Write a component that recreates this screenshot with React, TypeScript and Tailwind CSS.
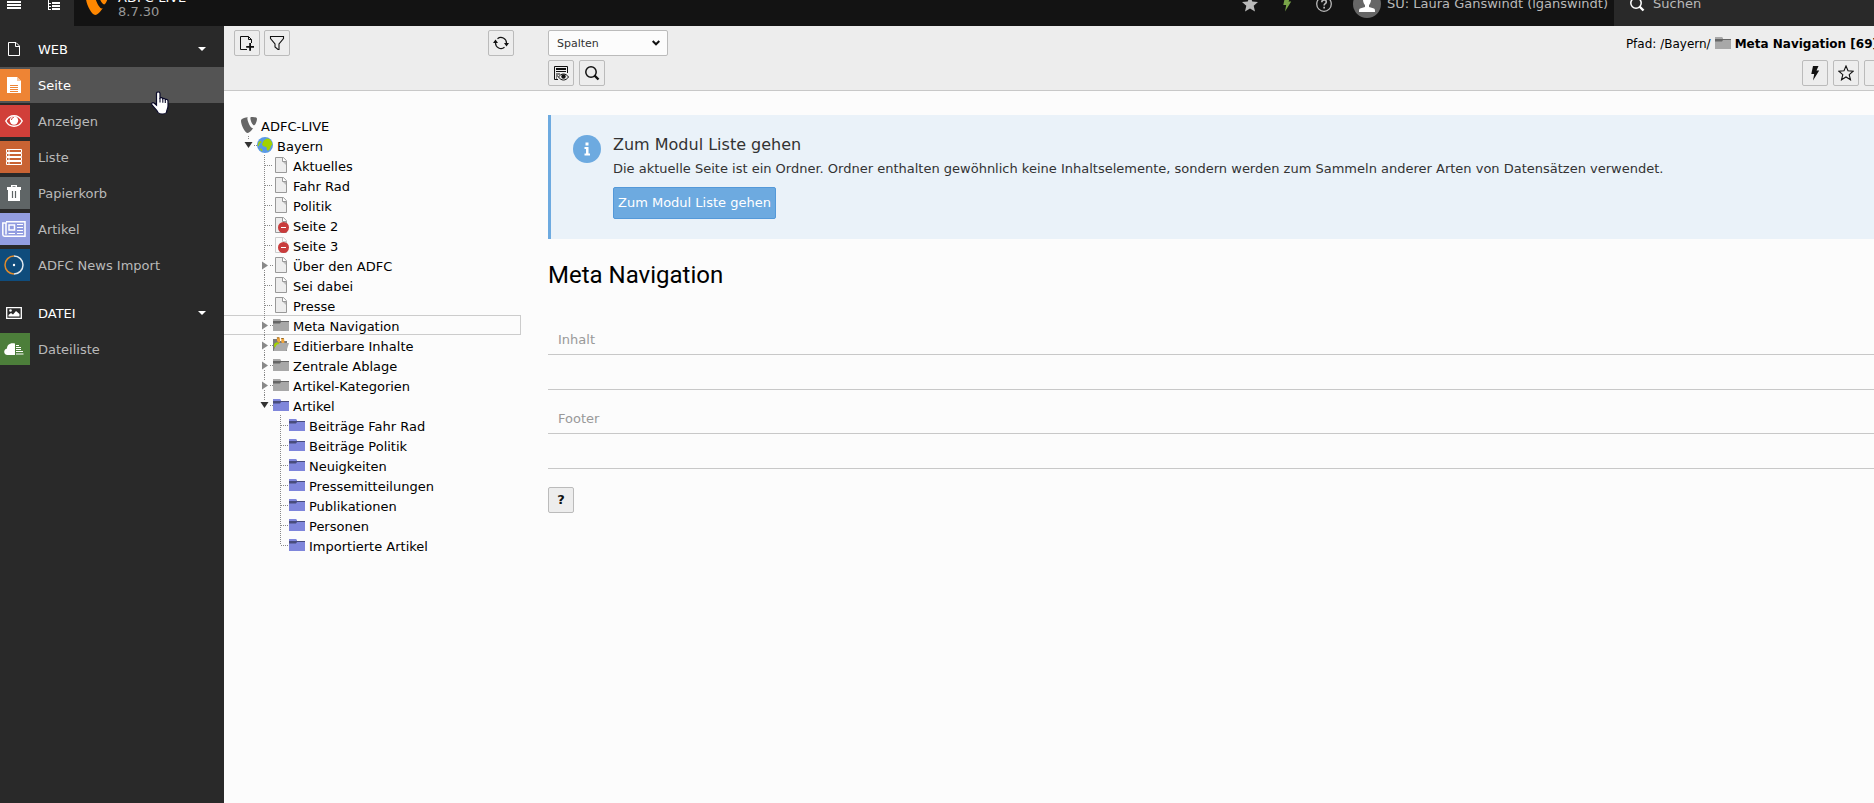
import React, { useState } from "react";

type TreeIcon = "page" | "pageHidden" | "pageFaded" | "folder" | "folderUsers" | "folderBlue" | "globe" | "typo3";

interface TreeRow {
  label: string;
  icon: TreeIcon;
  level: number;
  toggle?: "open" | "closed";
  last?: boolean;
}

const TREE: TreeRow[] = [
  { label: "ADFC-LIVE", icon: "typo3", level: 0 },
  { label: "Bayern", icon: "globe", level: 1, toggle: "open", last: true },
  { label: "Aktuelles", icon: "page", level: 2 },
  { label: "Fahr Rad", icon: "page", level: 2 },
  { label: "Politik", icon: "page", level: 2 },
  { label: "Seite 2", icon: "pageHidden", level: 2 },
  { label: "Seite 3", icon: "pageFaded", level: 2 },
  { label: "Über den ADFC", icon: "page", level: 2, toggle: "closed" },
  { label: "Sei dabei", icon: "page", level: 2 },
  { label: "Presse", icon: "page", level: 2 },
  { label: "Meta Navigation", icon: "folder", level: 2, toggle: "closed" },
  { label: "Editierbare Inhalte", icon: "folderUsers", level: 2, toggle: "closed" },
  { label: "Zentrale Ablage", icon: "folder", level: 2, toggle: "closed" },
  { label: "Artikel-Kategorien", icon: "folder", level: 2, toggle: "closed" },
  { label: "Artikel", icon: "folderBlue", level: 2, toggle: "open", last: true },
  { label: "Beiträge Fahr Rad", icon: "folderBlue", level: 3 },
  { label: "Beiträge Politik", icon: "folderBlue", level: 3 },
  { label: "Neuigkeiten", icon: "folderBlue", level: 3 },
  { label: "Pressemitteilungen", icon: "folderBlue", level: 3 },
  { label: "Publikationen", icon: "folderBlue", level: 3 },
  { label: "Personen", icon: "folderBlue", level: 3 },
  { label: "Importierte Artikel", icon: "folderBlue", level: 3, last: true },
];

const Typo3Mark = ({ className }: { className: string }) => (
  <svg viewBox="1.9 1.9 12.1 12.1" className={className} fill="currentColor" aria-hidden="true">
    <path d="M11.1 10.3c-.2 0-.3.1-.5.1-1.6 0-3.9-5.5-3.9-7.3 0-.7.2-.9.4-1.1-1.9.2-4.2.9-4.9 1.8-.2.2-.3.6-.3 1.1C1.9 7.7 4.9 14 7 14c1.1 0 2.8-1.7 4.1-3.7M10.1 1.9c1.9 0 3.9.3 3.9 1.4 0 2.2-1.4 4.9-2.1 4.9-1.3 0-2.9-3.6-2.9-5.4 0-.8.3-.9 1.1-.9" />
  </svg>
);

// 16x16 icon frame used by nearly everything in the backend
const Icon = ({ children, className = "" }: { children: React.ReactNode; className?: string }) => (
  <svg viewBox="0 0 16 16" className={`h-4 w-4 shrink-0 ${className}`} fill="currentColor" aria-hidden="true">
    {children}
  </svg>
);

const Search = ({ className = "" }: { className?: string }) => (
  <Icon className={className}>
    <circle cx="7" cy="7" r="5.2" fill="none" stroke="currentColor" strokeWidth="1.5" />
    <path d="M10.5 10.5l4 4" stroke="currentColor" strokeWidth="2.4" />
  </Icon>
);

const Bolt = ({ className = "" }: { className?: string }) => (
  <Icon className={className}>
    <path d="M6 1h5.5L9.5 5.600h2.700L6 15.500l1.200-6.500H4.300z" />
  </Icon>
);

const Folder = ({ back, tab }: { back: string; tab: string }) => (
  <Icon>
    <path fill={back} d="M0 2h7l1 1v1h8v10H0z" />
    <path fill={tab} d="M0 4h16v1H8L7 6.5H0z" />
  </Icon>
);

const Page = ({ faded = false, hidden = false }: { faded?: boolean; hidden?: boolean }) => (
  <Icon>
    <path fill={faded ? "#fafafa" : "#ededed"} stroke={faded ? "#ccc" : "#999"} d="M2.5.5h7.8l3.2 3.2v11.8h-11z" />
    <path fill={faded ? "#e8e8e8" : "#bbb"} d="M9 4l4 4V4z" />
    <path fill="#fff" stroke={faded ? "#ccc" : "#999"} d="M9.5.5v4h4" />
    {hidden && (
      <>
        <circle cx="10.5" cy="10.5" r="5.5" fill="#c83c3c" />
        <path fill="#fff" d="M8 10h5v1H8z" />
      </>
    )}
  </Icon>
);

const NodeIcon = ({ icon }: { icon: TreeIcon }) => {
  switch (icon) {
    case "typo3":
      return <Typo3Mark className="h-4 w-4 shrink-0 text-[#666]" />;
    case "globe":
      return (
        <Icon>
          <circle cx="8" cy="8" r="8" fill="#5999e6" />
          <path fill="#a2d200" d="M7 3.2l3-1.7 2.6.4 2.2 3 .7 3-1.3.6-1 3-2 2.2-1.3-.6-.5-3L6 9.2l-1-2 1-2.3zM1.8 4.5L4 4l.6 1.4-2 1.4-1 2.4-1-.6zM2.5 11l2.3 1 .8 2.4-1.8-1z" />
        </Icon>
      );
    case "pageHidden":
      return <Page hidden />;
    case "pageFaded":
      return <Page hidden faded />;
    case "folder":
      return <Folder back="#a8a8a8" tab="#666" />;
    case "folderBlue":
      return <Folder back="#7f86db" tab="#484c7d" />;
    case "folderUsers":
      return (
        <Icon>
          <path fill="#7a7a7a" d="M0 2h5l1 2h8v10H0z" />
          <path fill="#aaa" d="M3.5 6H16l-2.6 8H.5z" />
          <path fill="#a2d200" d="M1 8.5C1 6 3 5 5 5.2L6.5 7 4 7.5 1.5 11z" />
          <path fill="#f0a63c" d="M4 .8C5.5-.2 7 .6 7 2.5v3H5.5L4 3.8zM8.3 1.5c1.2-1 3-.3 3 1.5v3H9L8.3 5z" />
          <path fill="#7a4f10" d="M3.8.5h2.6v.8H3.8zM8.2 1.2h2.6V2H8.2z" />
        </Icon>
      );
    default:
      return <Page />;
  }
};

// Dotted connector in front of a tree node, with the expand arrow where there is one
const Connector = ({ toggle, last, level }: { toggle?: "open" | "closed"; last?: boolean; level: number }) => (
  <svg viewBox="0 0 16 20" className="h-5 w-4 shrink-0" aria-hidden="true">
    <g stroke="#888" strokeDasharray="1 1" fill="none">
      {level === 1 ? <path d="M7.5 1v3" /> : toggle ? <path d="M7.5 0v5" /> : <path d={last ? "M7.5 0v10" : "M7.5 0v20"} />}
      {toggle && !last && <path d="M7.5 15v5" />}
      <path d={toggle ? "M13 10.5h3" : "M8 10.5h8"} />
    </g>
    {toggle === "closed" && <path fill="#888" d="M5 6.5v8l6-4z" />}
    {toggle === "open" && <path fill="#333" d="M3.5 7h8l-4 6z" />}
  </svg>
);

const ICON_PAGE = (
  <Icon>
    <path d="M1 0h10l4 4v12H1z" fill="#fff" />
    <path d="M11 0v4h4z" fill="#f7c49a" />
    <path d="M4 8.500h8M4 10.500h8M4 12.500h8M4 14.500h8" stroke="#ee8434" />
  </Icon>
);

const ICON_VIEW = (
  <svg viewBox="0 0 18 16" className="h-4 w-[18px]" fill="none" aria-hidden="true">
    <path d="M.8 8C4.500 1 13.500 1 17.200 8 13.500 15 4.500 15 .8 8z" stroke="#fff" strokeWidth="1.4" />
    <circle cx="9" cy="7.500" r="4.200" fill="#fff" />
    <path d="M6.500 7c0-1.500 1-2.500 2.300-2.600" stroke="#d13f39" />
  </svg>
);

const ICON_LIST = (
  <Icon>
    {[0.5, 4.5, 8.5, 12.5].map((y) => (
      <g key={y}>
        <path d={`M.5 ${y}h15v3H.5z`} fill="none" stroke="#fff" />
        <path d={`M3 ${y}v3`} stroke="#fff" />
      </g>
    ))}
  </Icon>
);

const ICON_TRASH = (
  <Icon>
    <path d="M5 0h6v2h4v3H1V2h4zM6.500 1.200V2h3v-.8z" fillRule="evenodd" fill="#fff" />
    <path d="M2 5h12v11H2z" fill="#fff" />
    <path d="M6.500 6v7M9.500 6v7" stroke="#5f6566" strokeWidth="1.200" />
  </Icon>
);

const ICON_NEWS = (
  <svg viewBox="0 0 24 16" className="h-4 w-6" fill="none" stroke="#fff" aria-hidden="true">
    <path d="M4 .8h19v14.400H2.500C1.300 15.200.8 14.500.8 13.500V2H4v11.500" strokeWidth="1.500" />
    <path d="M7 4h5.500v5H7z" strokeWidth="1.500" />
    <path d="M15 3.500h6M15 6.500h6M15 9.500h6M6.500 12.500H13M15 12.500h6" />
  </svg>
);

const ICON_RING = (
  <svg viewBox="0 0 20 20" className="h-5 w-5" fill="none" aria-hidden="true">
    <path d="M10 1a9 9 0 0 1 0 18" stroke="#dfe8ef" strokeWidth="1.500" />
    <path d="M10 1a9 9 0 0 0 0 18" stroke="#e08b2c" strokeWidth="1.500" />
    <circle cx="10" cy="10" r="1.200" fill="#fff" />
  </svg>
);

const ICON_CLOUD = (
  <svg viewBox="0 0 20 12" className="h-3 w-5" aria-hidden="true">
    <path fill="#fff" d="M11 0v12H3.500C-.8 12-.8 6 3 5.500 3 2 6-.8 11 .5z" />
    <path d="M12 2.500h3M12 4.500h5M12 6.500h5M12 8.500h7M12 11h7.500" stroke="#fff" strokeWidth="1.200" />
  </svg>
);

const MODULES = [
  { label: "Seite", color: "bg-[#ee8434]", icon: ICON_PAGE },
  { label: "Anzeigen", color: "bg-[#d13f39]", icon: ICON_VIEW },
  { label: "Liste", color: "bg-[#c96333]", icon: ICON_LIST },
  { label: "Papierkorb", color: "bg-[#5f6566]", icon: ICON_TRASH },
  { label: "Artikel", color: "bg-[#929de0]", icon: ICON_NEWS },
  { label: "ADFC News Import", color: "bg-[#0f4c7c]", icon: ICON_RING },
];

const FILE_MODULES = [{ label: "Dateiliste", color: "bg-[#4c7e3a]", icon: ICON_CLOUD }];

interface GroupProps {
  title: string;
  icon: React.ReactNode;
  modules: typeof MODULES;
  active: string;
  onSelect: (label: string) => void;
}

const ModuleGroup = ({ title, icon, modules, active, onSelect }: GroupProps) => (
  <section>
    <button className="flex h-9 w-full items-center text-left text-white">
      <span className="flex w-[38px] items-center pl-1.5">{icon}</span>
      <span className="flex-1 pt-0.5">{title}</span>
      <svg viewBox="0 0 8 4" className="mr-[18px] h-1 w-2" fill="#fff" aria-hidden="true">
        <path d="M0 0h8L4 4z" />
      </svg>
    </button>
    <ul>
      {modules.map((m) => (
        <li key={m.label}>
          <button
            onClick={() => onSelect(m.label)}
            className={`flex h-9 w-full items-center gap-2 text-left ${
              active === m.label ? "bg-[#545454] text-white" : "text-[#b9b9b9]"
            }`}
          >
            <span className={`flex h-8 w-[30px] shrink-0 items-center justify-center pr-0.5 ${m.color}`}>{m.icon}</span>
            <span className="pt-0.5">{m.label}</span>
          </button>
        </li>
      ))}
    </ul>
  </section>
);

const ToolButton = ({ label, children }: { label: string; children: React.ReactNode }) => (
  <button
    aria-label={label}
    className="flex h-[26px] w-[26px] shrink-0 items-center justify-center rounded-xs border border-[#bbb] bg-[#ededed] text-[#111]"
  >
    {children}
  </button>
);

const Column = ({ title }: { title: string }) => (
  <section>
    <h2 className="flex h-11 items-end border-b border-[#c8c8c8] px-2.5 pb-1 text-[#999]">{title}</h2>
    <div className="h-[35px] border-b border-[#c8c8c8]" />
  </section>
);

export default function App() {
  const [activeModule, setActiveModule] = useState("Seite");
  const [selected, setSelected] = useState("Meta Navigation");

  return (
    <div className="relative h-screen overflow-hidden bg-[#fcfcfc] font-['DejaVu_Sans',Verdana,sans-serif] text-[13px] leading-5 text-black">
      <div className="flex h-full w-[calc(100%+40px)] flex-col">
        {/* Top bar, scrolled partly out of view */}
        <header className="flex h-[26px] shrink-0 items-end overflow-hidden bg-[#131313] text-[#b9b9b9]">
          <div className="flex h-[45px] w-[74px] shrink-0 items-center gap-[26px] bg-[#292929] pl-1.5 text-white">
            <button aria-label="Menü">
              <Icon>
                <path d="M1 2h14v2H1zM1 5h14v2H1zM1 8h14v2H1zM1 11h14v2H1z" />
              </Icon>
            </button>
            <button aria-label="Seitenbaum">
              <Icon>
                <path d="M0 0h1v14H0zM0 3h3v1H0zM0 7h3v1H0zM0 10h3v1H0zM0 13h3v1H0zM4 2h8v2H4zM4 6h8v2H4zM4 9h8v2H4zM4 12h8v2H4z" />
              </Icon>
            </button>
          </div>
          <div className="flex h-[45px] flex-1 items-center gap-2.5 pl-3">
            <Typo3Mark className="h-[22px] w-[22px] text-[#ff8700]" />
            <div className="pt-0.5 leading-[14px]">
              <div className="text-white">ADFC-LIVE</div>
              <div className="text-[#999]">8.7.30</div>
            </div>
          </div>
          <div className="flex h-[45px] shrink-0 items-center gap-[21px] pr-1.5">
            <button aria-label="Lesezeichen">
              <Icon>
                <path d="M8 0l2.300 5.400 5.700.5-4.300 3.900L13 15.500l-5-3-5 3 1.300-5.700L0 5.900l5.700-.5z" />
              </Icon>
            </button>
            <button aria-label="Cache leeren">
              <Bolt className="text-[#79a548]" />
            </button>
            <button aria-label="Hilfe">
              <Icon>
                <circle cx="8" cy="8" r="7.300" fill="none" stroke="currentColor" strokeWidth="1.300" />
                <path d="M5.800 6.300C5.800 3 10.300 3.300 10.300 6c0 1.700-2.200 1.700-2.200 3.500" fill="none" stroke="currentColor" strokeWidth="1.600" />
                <path d="M7.300 10.800H9v1.700H7.300z" />
              </Icon>
            </button>
            <button className="flex items-center gap-1.5">
              <svg viewBox="0 0 28 28" className="h-7 w-7" aria-hidden="true">
                <circle cx="14" cy="14" r="14" fill="#666" />
                <path fill="#fff" d="M14 5c3 0 4 2 4 4.500S17 14 16 15v2l5 1.500c1 .5 1 1.500 1 3.500H6c0-2 0-3 1-3.500L12 17v-2c-1-1-2-3-2-5.500S11 5 14 5z" />
              </svg>
              SU: Laura Ganswindt (lganswindt)
            </button>
          </div>
          <label className="flex h-[45px] w-[300px] shrink-0 items-center gap-2 bg-[#292929] pl-[15px]">
            <Search className="text-white" />
            <input
              type="search"
              aria-label="Suchen"
              placeholder="Suchen"
              className="w-full bg-transparent outline-none placeholder:text-[#b9b9b9]"
            />
          </label>
        </header>

        <div className="flex min-h-0 flex-1">
          <nav className="flex w-[224px] shrink-0 flex-col gap-3 bg-[#292929] pt-[5px]">
            <ModuleGroup
              title="WEB"
              icon={
                <Icon>
                  <path d="M2.500 1.500h7.500l3.500 3.500v9.500h-11zM9.500 1.500V5.500h4" fill="none" stroke="#fff" />
                </Icon>
              }
              modules={MODULES}
              active={activeModule}
              onSelect={setActiveModule}
            />
            <ModuleGroup
              title="DATEI"
              icon={
                <Icon>
                  <path d="M.7 2.700h14.600v10.600H.7z" fill="none" stroke="#fff" strokeWidth="1.300" />
                  <circle cx="4.500" cy="5.500" r="1.300" fill="#fff" />
                  <path d="M2.500 11.500V10l2.500-2 2 1.500L10 6l3.500 3v2.500z" fill="#fff" />
                </Icon>
              }
              modules={FILE_MODULES}
              active={activeModule}
              onSelect={setActiveModule}
            />
          </nav>

          {/* Page tree */}
          <aside className="flex w-[300px] shrink-0 flex-col">
            <div className="flex h-[65px] items-start gap-1 border-b border-[#c8c8c8] bg-[#ededed] px-2.5 pt-1">
              <ToolButton label="Neue Seite">
                <Icon>
                  <path d="M8 14.500H1.500v-13h8l3 3V8M9.500 1.500v3h3" fill="none" stroke="currentColor" />
                  <path d="M10.200 8h1.800v3h3v1.800h-3v3h-1.800v-3h-3V11h3z" />
                </Icon>
              </ToolButton>
              <ToolButton label="Filter">
                <Icon>
                  <path d="M1.500 1.500h13v2L10 9v5.500h-1L6 12V9L1.500 3.500z" fill="none" stroke="currentColor" strokeWidth="1.100" />
                </Icon>
              </ToolButton>
              <div className="ml-auto">
                <ToolButton label="Aktualisieren">
                  <Icon>
                    <path d="M4.500 3.800a5.500 5.500 0 0 1 9 4.200M11.500 12.200A5.500 5.500 0 0 1 2.500 8" fill="none" stroke="currentColor" strokeWidth="1.200" />
                    <path d="M11 8h5l-2.500 3.500zM0 8h5L2.500 4.500z" />
                  </Icon>
                </ToolButton>
              </div>
            </div>
            <ul className="mr-[3px] pt-6">
              {TREE.map((row) => (
                <li key={row.label}>
                  <button
                    onClick={() => setSelected(row.label)}
                    className={`flex h-5 w-full items-center border-y border-r pl-[17px] text-left ${
                      selected === row.label ? "border-[#ccc]" : "border-transparent"
                    }`}
                  >
                    {row.level > 1 && <span className="w-4 shrink-0" />}
                    {row.level > 2 && <span className="w-4 shrink-0" />}
                    {row.level > 0 && <Connector toggle={row.toggle} last={row.last} level={row.level} />}
                    <NodeIcon icon={row.icon} />
                    <span className="pt-1 pl-1 whitespace-nowrap">{row.label}</span>
                  </button>
                </li>
              ))}
            </ul>
          </aside>

          <main className="min-w-0 flex-1">
            <div className="flex h-[65px] justify-between border-b border-[#c8c8c8] bg-[#ededed] px-6 pt-1">
              <div className="flex flex-col gap-1">
                <div className="relative">
                  <select
                    aria-label="Ansicht"
                    className="h-[26px] w-[120px] appearance-none rounded-xs border border-[#bbb] bg-[#fcfcfc] pt-0.5 pl-2 text-[11px] text-[#333]"
                  >
                    <option>Spalten</option>
                    <option>Sprachen</option>
                  </select>
                  <svg viewBox="0 0 8 6" className="pointer-events-none absolute top-2.5 right-2 h-1.5 w-2" fill="none" stroke="#111" strokeWidth="2" aria-hidden="true">
                    <path d="M.7 1L4 4.300 7.300 1" />
                  </svg>
                </div>
                <div className="flex gap-[5px]">
                  <ToolButton label="Seite anzeigen">
                    <Icon>
                      <path d="M5 14.500H1.500v-13h13V8" fill="none" stroke="currentColor" />
                      <path d="M3 3h10v2H3zM3 6h10v1H3zM3 8.500h4v1H3zM3 10.500h2v1H3zM3 12.500h1v1H3z" />
                      <path d="M5.500 12c2.500-4 7.500-4 10 0-2.500 4-7.500 4-10 0z" fill="#ededed" stroke="currentColor" />
                      <circle cx="10.500" cy="11.500" r="2.200" />
                    </Icon>
                  </ToolButton>
                  <ToolButton label="Suche">
                    <Search />
                  </ToolButton>
                </div>
              </div>
              <div className="flex flex-col items-end gap-1">
                <div className="mr-3 flex h-[26px] items-center gap-1 text-xs whitespace-nowrap">
                  <span className="pt-0.5">Pfad: /Bayern/</span>
                  <Folder back="#a8a8a8" tab="#666" />
                  <strong className="pt-0.5">Meta Navigation [69]</strong>
                </div>
                <div className="flex gap-[5px]">
                  <ToolButton label="Cache dieser Seite löschen">
                    <Bolt />
                  </ToolButton>
                  <ToolButton label="Lesezeichen anlegen">
                    <Icon>
                      <path d="M8 1l2 4.800 5.200.4-4 3.500 1.300 5.100L8 12l-4.500 2.800 1.300-5.100-4-3.500L6 5.800z" fill="none" stroke="currentColor" strokeWidth="1.100" />
                    </Icon>
                  </ToolButton>
                  <ToolButton label="Hilfe">
                    <Icon>
                      <path d="M9 3h6v10H9z" />
                    </Icon>
                  </ToolButton>
                </div>
              </div>
            </div>

            <div className="px-6 pt-6">
              <div className="flex gap-3 border-l-3 border-[#6daae0] bg-[#eaf2f9] py-5 pl-[22px] text-[#333]">
                <svg viewBox="0 0 28 28" className="h-7 w-7 shrink-0" aria-hidden="true">
                  <circle cx="14" cy="14" r="14" fill="#6daae0" />
                  <path fill="#fff" d="M12.500 7.500h3v3h-3zM11.500 12h4v6.500h1.500v2h-5.500v-2h1.500V14h-1.500z" />
                </svg>
                <div>
                  <h4 className="text-base leading-5">Zum Modul Liste gehen</h4>
                  <p className="mt-1">
                    Die aktuelle Seite ist ein Ordner. Ordner enthalten gewöhnlich keine Inhaltselemente, sondern werden zum Sammeln anderer Arten von Datensätzen verwendet.
                  </p>
                  <button className="mt-2 h-8 rounded-xs border border-[#5499d9] bg-[#6daae0] px-1 text-white">
                    Zum Modul Liste gehen
                  </button>
                </div>
              </div>

              <h1 className="mt-[18px] mb-[18px] font-[Roboto,sans-serif] text-2xl leading-9">Meta Navigation</h1>

              <Column title="Inhalt" />
              <Column title="Footer" />

              <div className="mt-[18px]">
                <ToolButton label="Hilfe zu diesem Modul">
                  <b>?</b>
                </ToolButton>
              </div>
            </div>
          </main>
        </div>
      </div>

      {/* Hand pointer over the active module */}
      <svg viewBox="0 0 18 24" className="pointer-events-none absolute top-[91px] left-[151px] h-6 w-[18px]" aria-hidden="true">
        <path
          d="M5.500 2.500c0-2.300 3.500-2.300 3.500 0V7c1-.8 2.500-.5 2.800.7.9-.6 2.300-.3 2.500.9 1.200-.6 2.700 0 2.700 1.500V15c0 3-1.500 4-1.500 6.500-1.500 2-7 2-8.500 0C6 18.500 2 16 .8 13.500.3 12 2 11 3.300 12.200l2.200 2z"
          fill="#fff"
          stroke="#0b0b2a"
          strokeWidth="1.200"
        />
        <path d="M9 7v4.500M11.800 7.700v4M14.300 8.600v3.400" stroke="#0b0b2a" strokeWidth="1.100" />
      </svg>
    </div>
  );
}
